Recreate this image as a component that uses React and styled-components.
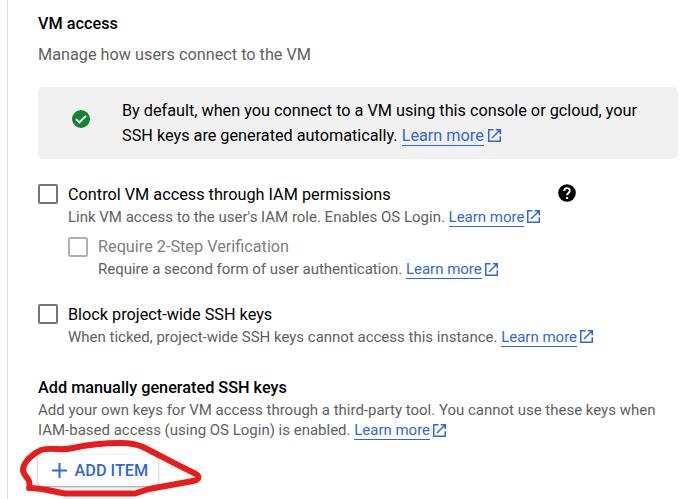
import React from "react";
import styled, { createGlobalStyle } from "styled-components";

const GlobalStyle = createGlobalStyle`
  * { box-sizing: border-box; }
  body { margin: 0; background: #fff; overflow: hidden; }
  svg { display: block; flex: none; }
`;

const Page = styled.main`
  width: 691px;
  height: 499px;
  display: flex;
  padding-left: 7px;
  overflow: hidden;
  font-family: Roboto, "Liberation Sans", sans-serif;
  color: #000;
`;

const Panel = styled.section`
  flex: 1;
  border-left: 1px solid #dadce0;
  padding: 14px 13px 0 30px;
`;

const Heading = styled.h3`
  margin: 0;
  font-size: 16.25px;
  line-height: 20px;
  font-weight: 500;
  white-space: nowrap;
`;

const Subtitle = styled.p`
  margin: 11px 0 0;
  font-size: 16.25px;
  line-height: 20px;
  color: #616161;
  white-space: nowrap;
`;

const Notice = styled.div`
  display: flex;
  align-items: flex-start;
  height: 72px;
  margin-top: 22px;
  padding: 11px 0 0 33.5px;
  border-radius: 5px;
  background: #f1f1f1;
`;

const NoticeIcon = styled.div`
  width: 50.5px;
  padding-top: 12px;
`;

const NoticeText = styled.div`
  font-size: 16.25px;
  line-height: 25px;
  letter-spacing: -0.008px;
`;

const Line = styled.div`
  display: flex;
  white-space: pre;
`;

const Anchor = styled.a`
  display: flex;
  color: #3367d6;
  text-decoration: none;
`;

const AnchorText = styled.span`
  height: ${(p) => (p.$large ? 23 : 20)}px;
  border-bottom: 1px solid #3367d6;
`;

const AnchorIcon = styled.span`
  padding: ${(p) => p.$top}px 0 0 ${(p) => (p.$large ? 4 : 3)}px;
`;

const Option = styled.div`
  display: flex;
  gap: 10px;
  margin: ${(p) => p.$top}px 0 0 ${(p) => p.$indent || 0}px;
`;

const CheckBox = styled.span`
  width: 20px;
  height: 20px;
  flex: none;
  border: 2px solid ${(p) => (p.$disabled ? "#b0b0b0" : "#757575")};
  border-radius: 2px;
  background: #fff;
`;

const OptionBody = styled.div`
  width: 508px;
`;

const LabelRow = styled.div`
  display: flex;
  justify-content: space-between;
  align-items: flex-start;
  height: ${(p) => (p.$compact ? 22 : 23)}px;
`;

const Label = styled.span`
  padding-top: ${(p) => (p.$disabled ? 0 : 1)}px;
  font-size: 16.25px;
  line-height: 20px;
  color: ${(p) => (p.$disabled ? "#808080" : "#000")};
  white-space: nowrap;
`;

const Description = styled.div`
  font-size: 15px;
  line-height: 20px;
  letter-spacing: -0.006px;
  color: #616161;
`;

const KeysSection = styled.section`
  display: flex;
  flex-direction: column;
  margin-top: 31px;
`;

const KeysDescription = styled(Description)`
  margin-top: 2px;
`;

const AddButton = styled.button`
  display: flex;
  align-items: center;
  width: 120px;
  height: 31px;
  padding: 0 0 0 14px;
  gap: 7.5px;
  border: 0;
  border-radius: 4px;
  background: #fff;
  box-shadow: 0 1px 3px rgba(0, 0, 0, 0.35), 0 1px 1px rgba(0, 0, 0, 0.12);
  color: #3367d6;
  font: 500 16.25px/20px Roboto, sans-serif;
  white-space: nowrap;
`;

const ButtonArea = styled.div`
  position: relative;
  width: 120px;
  margin-top: 15px;
`;

const Scribble = styled.svg`
  position: absolute;
  left: -20px;
  top: -17px;
  pointer-events: none;
`;

const ExternalIcon = () => (
  <svg width="13" height="13" viewBox="0 0 13 13" fill="none" stroke="#3367d6" strokeWidth="1.5">
    <path d="M5.5 .75H.75v11.5h11.5V7.3M7.8 .75h4.45v4.6M12 1 4 9" />
  </svg>
);

const LearnMore = ({ large, iconTop = 3 }) => (
  <Anchor>
    <AnchorText $large={large}>Learn more</AnchorText>
    <AnchorIcon $large={large} $top={iconTop}><ExternalIcon /></AnchorIcon>
  </Anchor>
);

const CheckIcon = () => (
  <svg width="18" height="18" viewBox="0 0 18 18">
    <circle cx="9" cy="9" r="9" fill="#188038" />
    <path d="m4 9.2 3.3 3.3L14 5.8" fill="none" stroke="#fff" strokeWidth="1.8" />
  </svg>
);

const HelpIcon = () => (
  <svg width="18" height="18" viewBox="0 0 18 18">
    <circle cx="9" cy="9" r="8.8" />
    <path d="M6.2 7C6.2 3.2 11.8 3.2 11.8 6.8c0 2-2.8 2.3-2.8 4.5" fill="none" stroke="#fff" strokeWidth="1.9" />
    <path d="M8 13h2v2H8z" fill="#fff" />
  </svg>
);

const PlusIcon = () => (
  <svg width="15" height="15" viewBox="0 0 15 15" stroke="#3367d6" strokeWidth="2">
    <path d="M7.5 0v15M0 7.5h15" />
  </svg>
);

export default function App() {
  return (
    <Page>
      <GlobalStyle />
      <Panel>
        <Heading>VM access</Heading>
        <Subtitle>Manage how users connect to the VM</Subtitle>
        <Notice>
          <NoticeIcon><CheckIcon /></NoticeIcon>
          <NoticeText>
            <Line>By default, when you connect to a VM using this console or gcloud, your</Line>
            <Line>SSH keys are generated automatically. <LearnMore large iconTop={6} /></Line>
          </NoticeText>
        </Notice>

        <Option $top={25}>
          <CheckBox />
          <OptionBody>
            <LabelRow>
              <Label>Control VM access through IAM permissions</Label>
              <HelpIcon />
            </LabelRow>
            <Description><Line>Link VM access to the user's IAM role. Enables OS Login. <LearnMore /></Line></Description>
          </OptionBody>
        </Option>
        <Option $top={10} $indent={30}>
          <CheckBox $disabled />
          <OptionBody>
            <LabelRow $compact><Label $disabled>Require 2-Step Verification</Label></LabelRow>
            <Description><Line>Require a second form of user authentication. <LearnMore iconTop={4} /></Line></Description>
          </OptionBody>
        </Option>
        <Option $top={25}>
          <CheckBox />
          <OptionBody>
            <LabelRow><Label>Block project-wide SSH keys</Label></LabelRow>
            <Description><Line>When ticked, project-wide SSH keys cannot access this instance. <LearnMore /></Line></Description>
          </OptionBody>
        </Option>

        <KeysSection>
          <Heading>Add manually generated SSH keys</Heading>
          <KeysDescription>
            <Line>Add your own keys for VM access through a third-party tool. You cannot use these keys when</Line>
            <Line>IAM-based access (using OS Login) is enabled. <LearnMore iconTop={4} /></Line>
          </KeysDescription>
          <ButtonArea>
            <AddButton><PlusIcon />ADD ITEM</AddButton>
            <Scribble width="186" height="61" viewBox="18 438 186 61">
              <path
                d="M29 488C32 478 22 476 23 469C24 462 32 454 41 450C51 447 61 451 73 448C91 444 105 443 121 443C130 443 136 444 143 447C161 456 177 465 194 473C201 476 199 480 193 481L149 489L135 493.5H65C55 492 43 488 29 488Z"
                fill="none" stroke="#e71c1c" strokeWidth="6" strokeLinejoin="round"
              />
            </Scribble>
          </ButtonArea>
        </KeysSection>
      </Panel>
    </Page>
  );
}
